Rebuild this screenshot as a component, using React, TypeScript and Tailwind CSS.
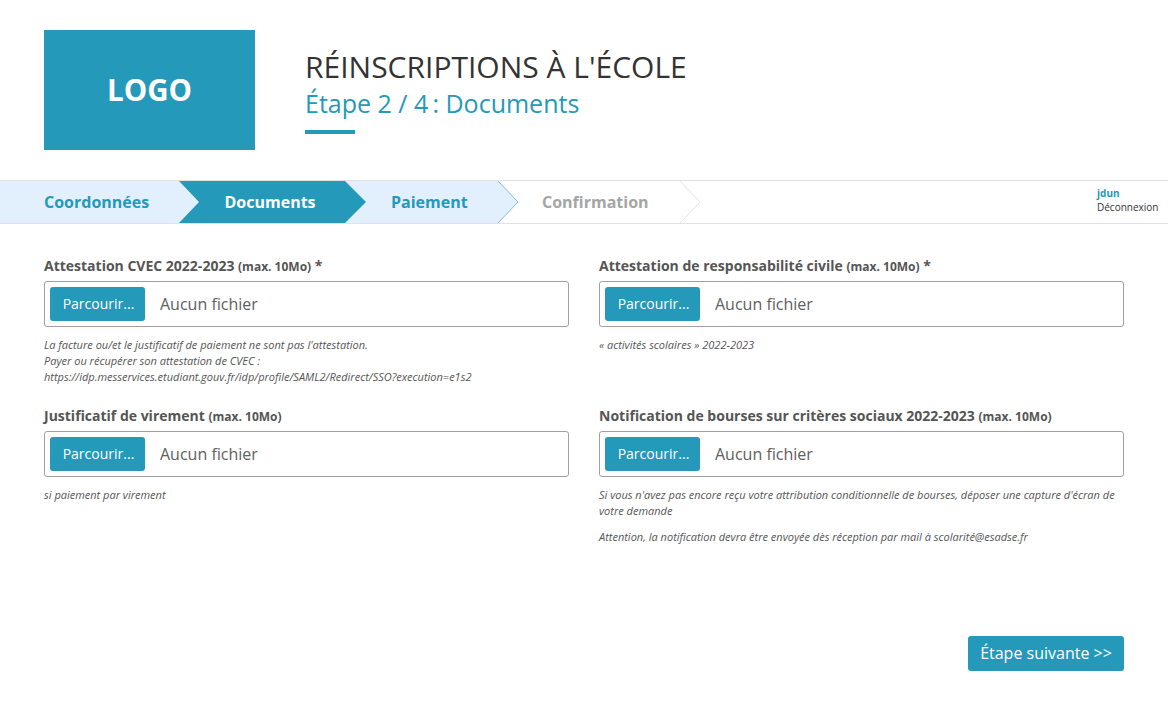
import React from 'react';

const FileField = ({ label, required, notes }: { label: string; required?: boolean; notes: React.ReactNode }) => (
  <div>
    <p className="text-[14px] leading-[20px] font-bold text-[#555555]">
      {label} <span className="text-[12px]">(max. 10Mo)</span>
      {required && <span className="text-[14px]"> *</span>}
    </p>
    <div className="mt-[4px] h-[46px] flex items-center px-[5px] border border-[#a0a0a0] rounded-[3px] bg-white">
      <button className="w-[95px] h-[34px] pl-[2px] pb-[1px] bg-[#2499b9] rounded-[3px] text-white text-[14px] text-center">
        Parcourir...
      </button>
      <span className="ml-[15px] text-[16px] text-[#606060]">Aucun fichier</span>
    </div>
    <div className="mt-[10px] text-[11px] leading-[16px] italic text-[#555555]">{notes}</div>
  </div>
);

const App = () => {
  return (
    <div className="w-[1168px] h-[721px] bg-white overflow-hidden font-['Open_Sans',sans-serif]">
      {/* Header */}
      <header className="h-[180px] pt-[30px] pl-[44px] flex">
        <div className="w-[211px] h-[120px] bg-[#2499b9] flex items-center justify-center text-white text-[29.5px] font-bold">
          LOGO
        </div>
        <div className="ml-[50px] pt-[17px]">
          <h1 className="text-[30px] leading-[40px] text-[#333333]">RÉINSCRIPTIONS À L'ÉCOLE</h1>
          <h2 className="text-[25px] leading-[32px] text-[#2499b9]">Étape 2 / 4&#8201;: Documents</h2>
          <div className="mt-[11px] w-[50px] h-[4px] bg-[#2499b9]"></div>
        </div>
      </header>

      {/* Steps */}
      <nav className="relative h-[44px] flex items-center border-y border-[#e2e2e2] text-[16px] font-bold">
        <svg className="absolute left-0 top-0" width="720" height="42" viewBox="0 0 720 42">
          <rect x="0" y="0" width="200" height="42" fill="#e2f0fd" />
          <path d="M345 0H498L518 21L498 42H345Z" fill="#e2f0fd" />
          <path d="M179 0H345L366 21L345 42H179L199 21Z" fill="#2499b9" />
          <path d="M498 0L518 21L498 42" fill="none" stroke="#7fbfd8" />
          <path d="M680 0L700 21L680 42" fill="none" stroke="#e2e2e2" />
        </svg>
        <span className="relative ml-[44px] w-[180.5px] text-[#2499b9]">Coordonnées</span>
        <span className="relative w-[166.5px] text-white">Documents</span>
        <span className="relative w-[151px] text-[#2499b9]">Paiement</span>
        <span className="relative text-[#a5a5a5]">Confirmation</span>
        <div className="ml-auto mr-[9px] w-[62px] text-[10px] leading-[14px] -mt-[4px]">
          <p className="font-bold text-[#2499b9]">jdun</p>
          <p className="font-normal text-[#333333]">Déconnexion</p>
        </div>
      </nav>

      {/* Form */}
      <main className="px-[44px] pt-[32px]">
        <div className="grid grid-cols-2 gap-x-[30px]">
          <div className="h-[150px]">
            <FileField
              label="Attestation CVEC 2022-2023"
              required
              notes={
                <>
                  <p>La facture ou/et le justificatif de paiement ne sont pas l'attestation.</p>
                  <p>Payer ou récupérer son attestation de CVEC :</p>
                  <p>https://idp.messervices.etudiant.gouv.fr/idp/profile/SAML2/Redirect/SSO?execution=e1s2</p>
                </>
              }
            />
          </div>
          <div className="h-[150px]">
            <FileField
              label="Attestation de responsabilité civile"
              required
              notes={<p>« activités scolaires » 2022-2023</p>}
            />
          </div>
          <FileField label="Justificatif de virement" notes={<p>si paiement par virement</p>} />
          <FileField
            label="Notification de bourses sur critères sociaux 2022-2023"
            notes={
              <>
                <p>Si vous n'avez pas encore reçu votre attribution conditionnelle de bourses, déposer une capture d'écran de votre demande</p>
                <p className="mt-[10px]">Attention, la notification devra être envoyée dès réception par mail à scolarité@esadse.fr</p>
              </>
            }
          />
        </div>
        <div className="mt-[91px] flex justify-end">
          <button className="w-[156px] h-[35px] pb-[2px] bg-[#2499b9] rounded-[3px] text-white text-[16px]">
            Étape suivante &gt;&gt;
          </button>
        </div>
      </main>
    </div>
  );
};

export default App;
